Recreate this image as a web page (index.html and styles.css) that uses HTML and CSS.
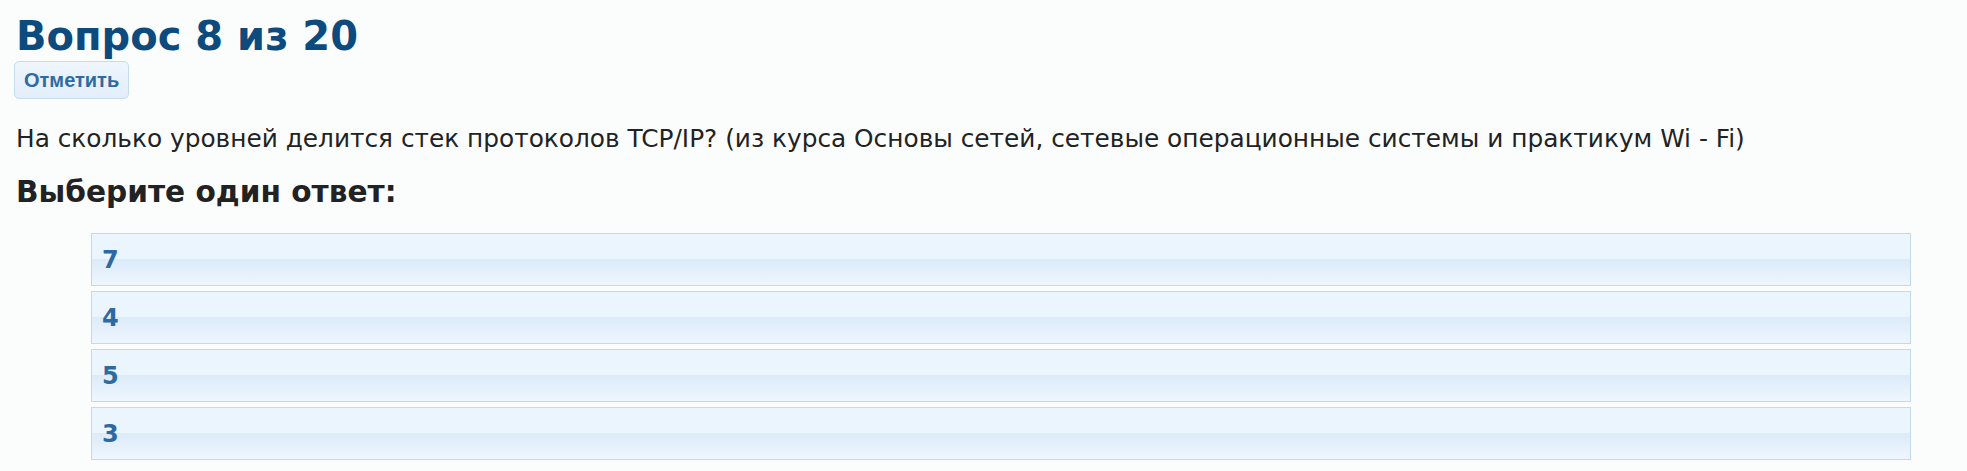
FILE: index.html
```html
<!DOCTYPE html>
<html lang="ru">
<head>
  <meta charset="UTF-8">
  <title>Вопрос 8 из 20</title>
  <link rel="stylesheet" href="styles.css">
</head>
<body>

  <div class="question">
    <h2 class="q-title">Вопрос 8 из 20</h2>
    <button class="flag-btn" type="button">Отметить</button>

    <p class="q-text">На сколько уровней делится стек протоколов TCP/IP? (из курса Основы сетей, сетевые операционные системы и практикум Wi - Fi)</p>

    <h3 class="q-prompt">Выберите один ответ:</h3>

    <!-- варианты ответа -->
    <div class="answers">
      <div class="answer">7</div>
      <div class="answer">4</div>
      <div class="answer">5</div>
      <div class="answer">3</div>
    </div>
  </div>

</body>
</html>
```

FILE: styles.css
```css
body {
  margin: 0;
  background: #fbfdfd;
  font-family: 'DejaVu Sans', 'Noto Sans', sans-serif;
  color: #222;
}

.question {
  padding: 12px 56px 10px 16px;
}

.q-title {
  margin: 0;
  font-size: 40px;
  font-weight: 600;
  line-height: 48px;
  color: #0d4a7e;
}

.flag-btn {
  display: block;
  margin: 1px 0 0 -2px;
  height: 38px;
  padding: 0 9px;
  font-family: 'Liberation Sans', Arial, sans-serif;
  font-size: 20px;
  font-weight: bold;
  color: #2f6ba3;
  background: linear-gradient(#eef5fd, #e2eefa);
  border: 1px solid #c6dcef;
  border-radius: 5px;
}

.q-text {
  margin: 25px 0 0;
  font-size: 24.8px;
  line-height: 30px;
}

.q-prompt {
  margin: 20px 0 0;
  font-size: 29.6px;
  font-weight: bold;
  line-height: 36px;
}

.answers {
  margin: 23px 0 0 75px;
  display: flex;
  flex-direction: column;
  gap: 5px;
}

.answer {
  height: 51px;
  padding: 0 10px;
  display: flex;
  align-items: center;
  font-size: 24px;
  font-weight: bold;
  color: #2f6a9f;
  border: 1px solid #c3d9ec;
  background: linear-gradient(#ebf5fe 0%, #ebf5fe 49%, #dcebf9 50%, #eef6fe 100%);
}
```
